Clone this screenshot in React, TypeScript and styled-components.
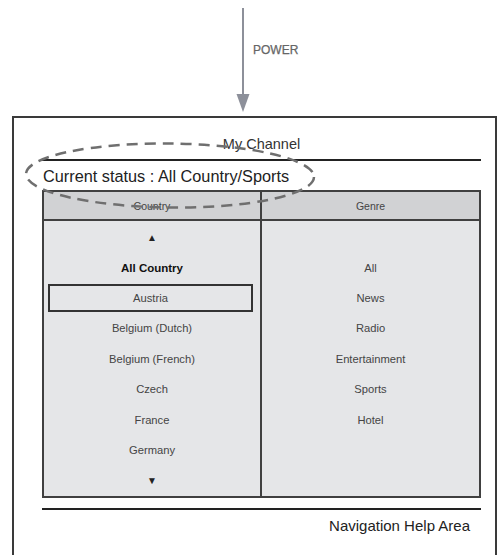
import React from "react";
import styled, { createGlobalStyle } from "styled-components";

const GlobalStyle = createGlobalStyle`
  html, body { margin: 0; padding: 0; background: #fff; }
  body {
    width: 501px;
    height: 555px;
    overflow: hidden;
    font-family: "Liberation Sans", Arial, Helvetica, sans-serif;
  }
`;

const Page = styled.div`
  position: relative;
  width: 501px;
  height: 555px;
  display: flex;
  flex-direction: column;
`;

const PowerArea = styled.div`
  height: 116px;
  flex: none;
  display: flex;
  align-items: flex-start;
  padding-left: 236px;
  box-sizing: border-box;
`;

const PowerLabel = styled.span`
  margin-left: 3px;
  margin-top: 43px;
  font-size: 12px;
  line-height: 15px;
  color: #666;
  -webkit-text-stroke: 0.25px #666;
`;

const Screen = styled.div`
  flex: 1;
  margin-left: 12px;
  width: 485px;
  box-sizing: border-box;
  border: 2px solid #3a3a3a;
  border-bottom: none;
  padding: 0 14px 0 28px;
  display: flex;
  flex-direction: column;
`;

const Title = styled.div`
  border-bottom: 2px solid #222;
  display: flex;
  align-items: flex-end;
  justify-content: center;
  padding-bottom: 6px;
  box-sizing: border-box;
  height: 43px;
  font-size: 14.5px;
  line-height: 17px;
  color: #333;
`;

const Status = styled.div`
  height: 29px;
  display: flex;
  align-items: center;
  padding-top: 2px;
  padding-left: 1px;
  box-sizing: border-box;
  font-size: 16.3px;
  color: #222;
`;

const Table = styled.div`
  display: grid;
  grid-template-columns: 218px 1fr;
  border: 2px solid #404040;
  background: #e5e6e8;
`;

const Column = styled.div<{ $divider?: boolean }>`
  display: flex;
  flex-direction: column;
  border-right: ${(p) => (p.$divider ? "2px solid #404040" : "none")};
`;

const HeaderCell = styled.div`
  height: 27px;
  border-bottom: 2px solid #404040;
  background: #d1d2d4;
  display: flex;
  align-items: center;
  justify-content: center;
  font-size: 10.5px;
  color: #444;
`;

const List = styled.div`
  display: flex;
  flex-direction: column;
  padding-top: 1px;
`;

const Row = styled.div<{ $bold?: boolean }>`
  height: 30.4px;
  display: flex;
  align-items: center;
  justify-content: center;
  font-size: ${(p) => (p.$bold ? "11.5px" : "11.2px")};
  font-weight: ${(p) => (p.$bold ? 700 : 400)};
  color: ${(p) => (p.$bold ? "#111" : "#444")};
`;

const Selected = styled.div`
  flex: 1;
  height: 28px;
  margin: 0 7px 0 4px;
  box-sizing: border-box;
  border: 2px solid #333;
  display: flex;
  align-items: center;
  justify-content: center;
`;

const Tri = styled.span`
  font-size: 10px;
  color: #222;
`;

const Footer = styled.div`
  margin-top: 10px;
  border-top: 2.5px solid #222;
  display: flex;
  justify-content: flex-end;
  padding: 7px 11px 0 0;
  font-size: 15px;
  line-height: 18px;
  color: #222;
`;

const Overlay = styled.svg`
  position: absolute;
  left: 0;
  top: 0;
  pointer-events: none;
`;

const countries = [
  "Austria",
  "Belgium (Dutch)",
  "Belgium (French)",
  "Czech",
  "France",
  "Germany",
];
const genres = ["All", "News", "Radio", "Entertainment", "Sports", "Hotel"];

export default function App() {
  return (
    <>
      <GlobalStyle />
      <Page>
        <PowerArea>
          <svg width="14" height="114" viewBox="0 0 14 114">
            <rect x="6" y="8" width="2" height="88" fill="#8d909a" />
            <polygon points="0.5,94 13.5,94 7,112" fill="#8d909a" />
          </svg>
          <PowerLabel>POWER</PowerLabel>
        </PowerArea>
        <Screen>
          <Title>My Channel</Title>
          <Status>Current status : All Country/Sports</Status>
          <Table>
            <Column $divider>
              <HeaderCell>Country</HeaderCell>
              <List>
                <Row>
                  <Tri>▲</Tri>
                </Row>
                <Row $bold>All Country</Row>
                {countries.map((c) =>
                  c === "Austria" ? (
                    <Row key={c}>
                      <Selected>{c}</Selected>
                    </Row>
                  ) : (
                    <Row key={c}>{c}</Row>
                  )
                )}
                <Row>
                  <Tri>▼</Tri>
                </Row>
              </List>
            </Column>
            <Column>
              <HeaderCell>Genre</HeaderCell>
              <List>
                <Row />
                {genres.map((g) => (
                  <Row key={g}>{g}</Row>
                ))}
              </List>
            </Column>
          </Table>
          <Footer>Navigation Help Area</Footer>
        </Screen>
        <Overlay width="501" height="555" viewBox="0 0 501 555">
          <ellipse
            cx="170"
            cy="175.5"
            rx="144"
            ry="32"
            transform="rotate(0.6 170 175.5)"
            fill="none"
            stroke="#6f6f6f"
            strokeWidth="2.5"
            strokeDasharray="11 7"
          />
        </Overlay>
      </Page>
    </>
  );
}
